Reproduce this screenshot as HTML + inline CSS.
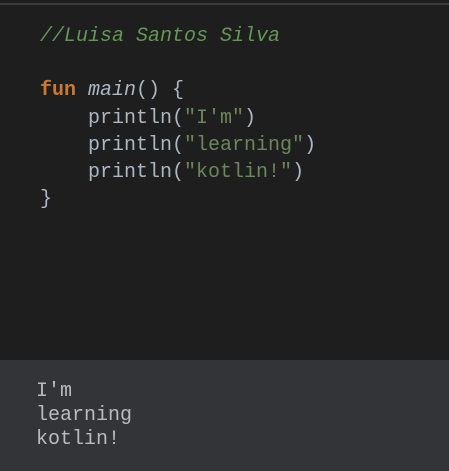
<!DOCTYPE html>
<html><head><style>
html,body{margin:0;padding:0;}
body{width:449px;height:471px;background:#1e1e1e;position:relative;overflow:hidden;font-family:"Liberation Mono",monospace;font-size:20px;}
.top{position:absolute;left:0;top:3px;width:449px;height:2px;background:#3a3a3a;}
.code{position:absolute;left:40px;top:23px;line-height:27.2px;color:#a9b7c6;white-space:pre;}
.c{color:#629755;font-style:italic;}
.k{color:#cc7832;font-weight:bold;}
.f{font-style:italic;color:#a9b7c6;}
.s{color:#6a8759;}
.out{position:absolute;left:0;top:360px;width:449px;height:111px;background:#333438;}
.o{position:absolute;left:36px;top:20px;line-height:24px;color:#bbbbbb;white-space:pre;}
</style></head><body>
<div class="top"></div>
<div class="code"><span class="c">//Luisa Santos Silva</span>

<span class="k">fun</span> <span class="f">main</span>() {
    println(<span class="s">"I'm"</span>)
    println(<span class="s">"learning"</span>)
    println(<span class="s">"kotlin!"</span>)
}</div>
<div class="out"><div class="o">I'm
learning
kotlin!</div></div>
</body></html>
